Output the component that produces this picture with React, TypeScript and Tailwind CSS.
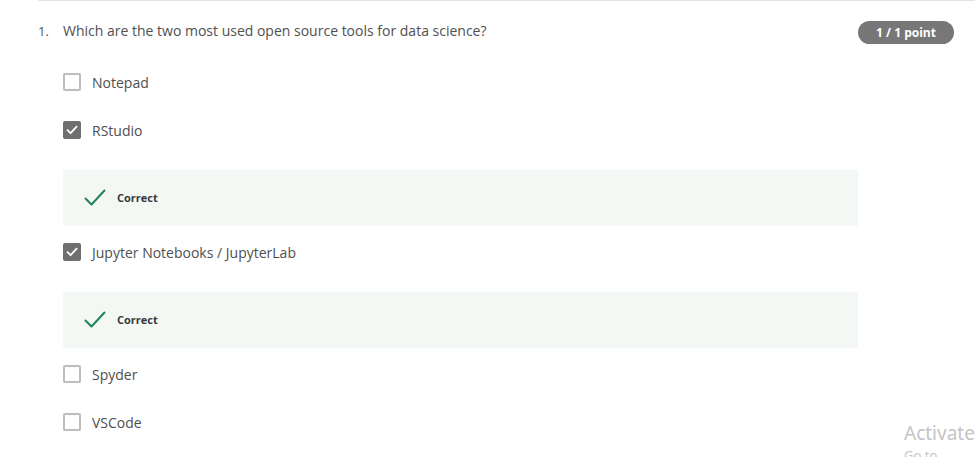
import React from "react";

const FONT = { fontFamily: '"Open Sans", "Noto Sans", Arial, sans-serif' };

type Opt = { label: string; checked: boolean; correct?: boolean };

const OPTIONS: Opt[] = [
  { label: "Notepad", checked: false },
  { label: "RStudio", checked: true, correct: true },
  { label: "Jupyter Notebooks / JupyterLab", checked: true, correct: true },
  { label: "Spyder", checked: false },
  { label: "VSCode", checked: false },
];

function Box({ checked }: { checked: boolean }) {
  if (checked) {
    return (
      <span className="flex h-[18px] w-[18px] shrink-0 items-center justify-center rounded-[2px] bg-[#6f6f6f]">
        <svg width="12" height="10" viewBox="0 0 12 10" fill="none">
          <path d="M1.5 5.2 L4.6 8.2 L10.6 1.6" stroke="#fff" strokeWidth="1.8" strokeLinecap="round" strokeLinejoin="round" />
        </svg>
      </span>
    );
  }
  return <span className="h-[18px] w-[18px] shrink-0 rounded-[2px] border-2 border-[#bdbdbd] bg-white" />;
}

function Feedback() {
  return (
    <div className="mt-[28px] flex h-[56px] items-center bg-[#f3f8f5] pl-[21px]">
      <svg width="22" height="18" viewBox="0 0 22 18" fill="none">
        <path d="M1.5 9.5 L7.5 15.5 L20.5 1.5" stroke="#1f8354" strokeWidth="2" strokeLinecap="round" strokeLinejoin="round" />
      </svg>
      <span className="ml-[11px] text-[11px] font-bold text-[#373a3c]">Correct</span>
    </div>
  );
}

export default function App() {
  return (
    <div className="relative h-[457px] w-[980px] overflow-hidden bg-white text-[#555]" style={FONT}>
      <div className="ml-[38px] mr-[5px] border-t border-[#e4e4e4]" />
      <div className="ml-[38px] mt-[18px] flex items-start">
        <span className="mt-[2px] w-[25px] text-[13px] leading-[20px]">1.</span>
        <div className="w-[795px]">
          <p className="mt-[2px] text-[14px] leading-[20px] text-[#505050]">
            Which are the two most used open source tools for data science?
          </p>
          <div className="mt-[29px]">
            {OPTIONS.map((o, i) => (
              <React.Fragment key={o.label}>
                <div
                  className={`flex h-6 items-center gap-[11px] ${
                    i === 0 ? "" : OPTIONS[i - 1].correct ? "mt-[14px]" : "mt-6"
                  }`}
                >
                  <Box checked={o.checked} />
                  <span className="text-[14px] text-[#4f4f4f]">{o.label}</span>
                </div>
                {o.correct ? <Feedback /> : null}
              </React.Fragment>
            ))}
          </div>
        </div>
        <span className="mt-[2px] flex h-[23px] w-[96px] items-center justify-center rounded-full bg-[#777] text-[12px] font-bold text-white">
          1 / 1 point
        </span>
      </div>
      <div className="absolute left-[904px] top-[420px] text-[#c4c4c4]" style={{ fontFamily: '"Noto Sans", "Open Sans", sans-serif' }}>
        <div className="text-[19px] leading-[26px]">Activate</div>
        <div className="text-[13px] leading-[18px]">Go to Settings</div>
      </div>
    </div>
  );
}
